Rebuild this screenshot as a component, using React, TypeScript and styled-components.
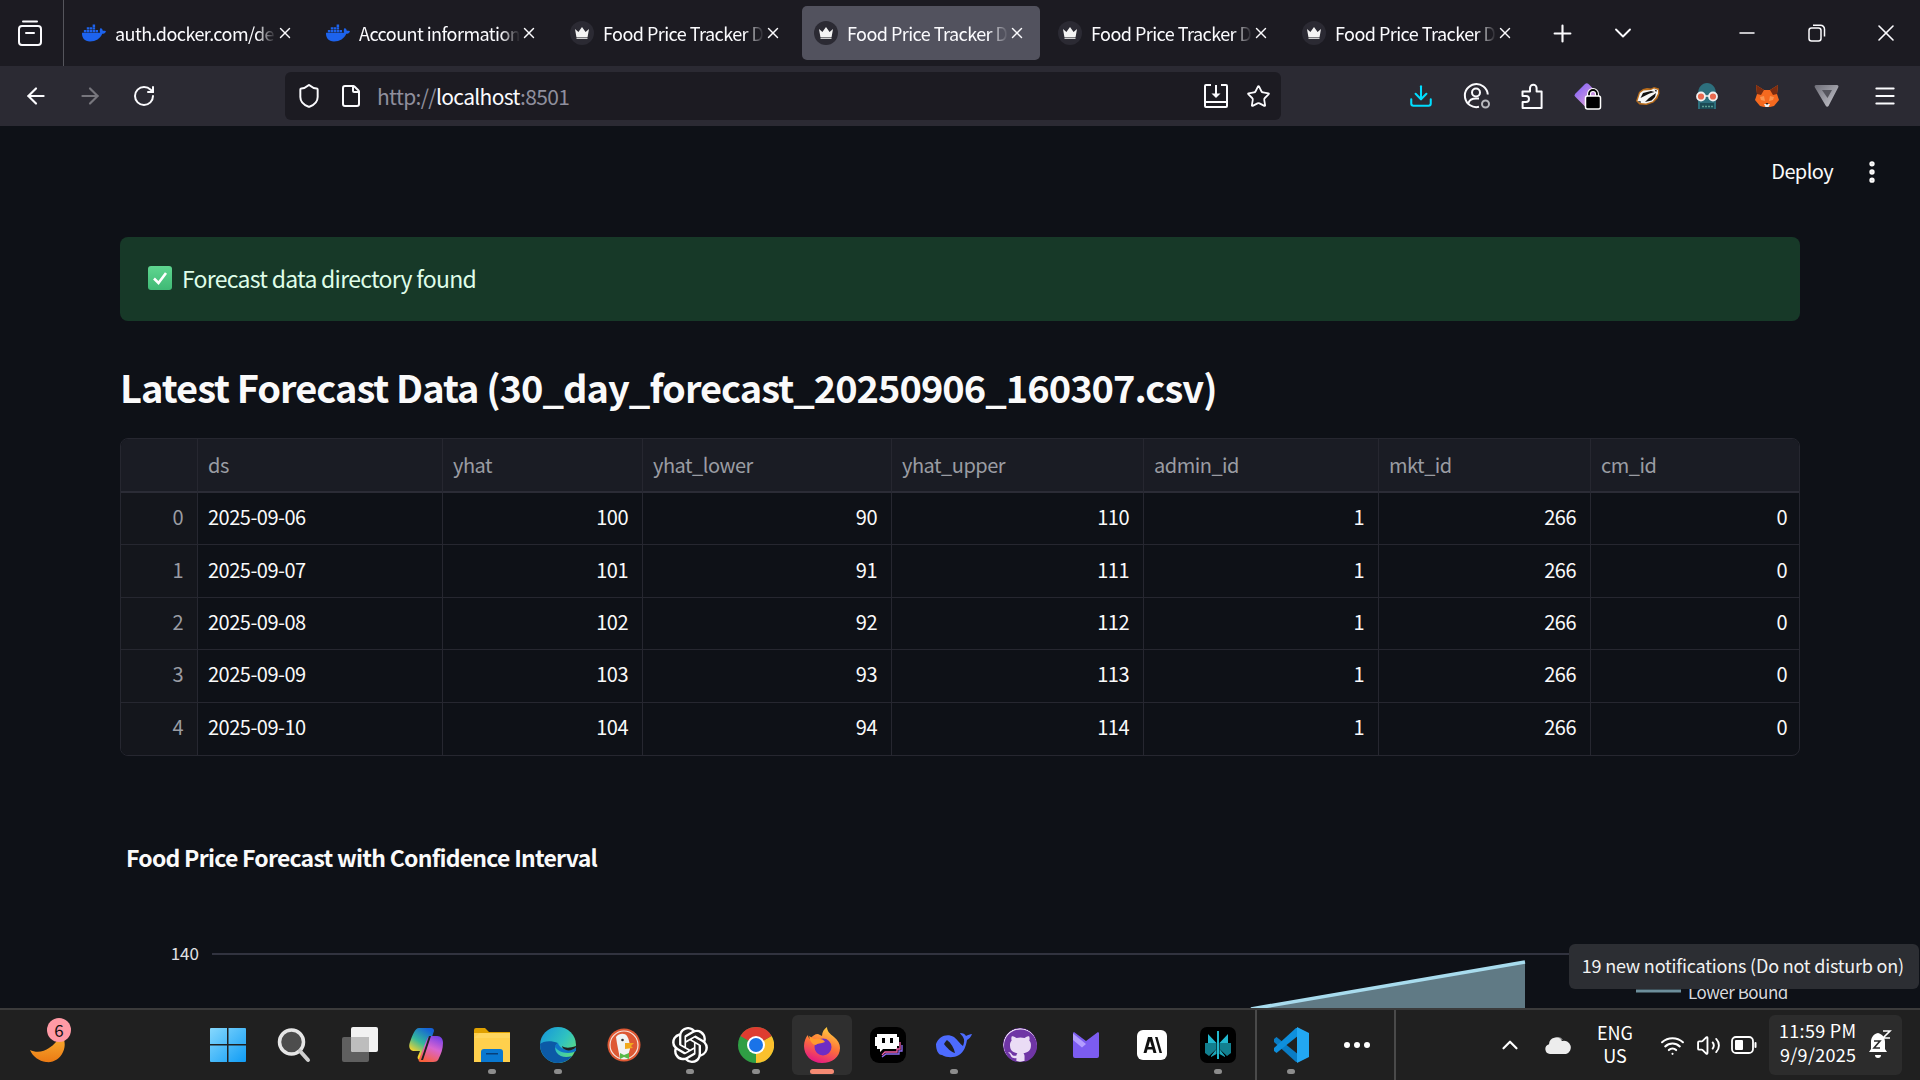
import * as React from 'react';
import styled, { createGlobalStyle } from 'styled-components';
import {
  ArrowLeft, ArrowRight, RotateCw, Shield, File, Star, Download, Menu,
  Plus, ChevronDown, ChevronUp, X, Minus, Wifi, Volume2, EllipsisVertical,
} from 'lucide-react';
import { FaDocker } from 'react-icons/fa';
import { SiOpenai, SiGithub } from 'react-icons/si';

const FONT = `"Noto Sans CJK SC", "Noto Sans", sans-serif`;

const GlobalStyle = createGlobalStyle`
  html, body { margin: 0; padding: 0; background: #0e1117; }
  body { font-family: ${FONT}; overflow: hidden; }
  * { box-sizing: border-box; }
`;

const Screen = styled.div`
  width: 1920px;
  height: 1080px;
  display: flex;
  flex-direction: column;
  overflow: hidden;
  position: relative;
`;

/* ---------- browser chrome ---------- */
const TabBar = styled.div`
  height: 66px;
  flex: none;
  display: flex;
  align-items: center;
  background: #1c1b22;
  color: #fbfbfe;
`;
const ViewButton = styled.div`
  width: 64px;
  height: 66px;
  flex: none;
  display: flex;
  align-items: center;
  justify-content: center;
  padding-right: 4px;
  border-right: 1px solid #55555c;
`;
const Tabs = styled.div`
  display: flex;
  gap: 6px;
  margin-left: 6px;
  margin-right: 3px;
`;
const Tab = styled.div<{ $active?: boolean }>`
  width: 238px;
  height: 54px;
  padding: 0 14px 0 12px;
  display: flex;
  align-items: center;
  border-radius: 5px;
  background: ${(p) => (p.$active ? '#52525e' : 'transparent')};
`;
const Favicon = styled.div<{ $plain?: boolean }>`
  width: 24px;
  height: 24px;
  flex: none;
  border-radius: 50%;
  display: flex;
  align-items: center;
  justify-content: center;
  background: ${(p) => (p.$plain ? 'transparent' : '#2b2a33')};
  color: #1d63ed;
`;
const TabTitle = styled.div`
  flex: 1;
  min-width: 0;
  margin-left: 9px;
  padding-bottom: 1px;
  font-size: 18px;
  letter-spacing: -0.55px;
  line-height: 26px;
  white-space: nowrap;
  overflow: hidden;
  -webkit-mask-image: linear-gradient(to right, #000 88%, transparent 100%);
  mask-image: linear-gradient(to right, #000 88%, transparent 100%);
`;
const TabClose = styled.div`
  width: 18px;
  flex: none;
  display: flex;
  justify-content: center;
  margin-top: -1px;
`;
const BarButton = styled.div<{ $w: number }>`
  width: ${(p) => p.$w}px;
  flex: none;
  display: flex;
  align-items: center;
  justify-content: center;
`;
const WindowControls = styled.div`
  margin-left: auto;
  display: flex;
  align-items: center;
`;

const ToolBar = styled.div`
  height: 60px;
  flex: none;
  display: flex;
  align-items: center;
  padding-left: 9px;
  background: #2b2a33;
  color: #fbfbfe;
`;
const UrlBar = styled.div`
  width: 996px;
  height: 48px;
  margin-left: 114px;
  margin-right: 112px;
  padding: 0 2px 0 11px;
  flex: none;
  display: flex;
  align-items: center;
  background: #1c1b22;
  border-radius: 6px;
`;
const PageIcon = styled.div`
  width: 28px;
  margin-left: 15px;
  display: flex;
  justify-content: center;
`;
const UrlText = styled.div`
  flex: 1;
  margin-left: 12px;
  font-size: 21px;
  letter-spacing: -0.65px;
  line-height: 28px;
  color: #8f8f9d;
  b { font-weight: 400; color: #fbfbfe; }
`;

/* ---------- streamlit page ---------- */
const Page = styled.main`
  flex: 1;
  min-height: 0;
  overflow: hidden;
  background: #0e1117;
  color: #fafafa;
`;
const PageHeader = styled.header`
  height: 92px;
  padding-right: 34px;
  display: flex;
  align-items: center;
  justify-content: flex-end;
`;
const DeployLabel = styled.div`
  font-size: 20px;
  letter-spacing: -0.6px;
  line-height: 28px;
  margin: 0 25px 2px 0;
`;
const PageBody = styled.div`
  padding: 19px 120px 0;
`;
const Alert = styled.div`
  height: 84px;
  padding: 0 28px 2px;
  display: flex;
  align-items: center;
  gap: 10px;
  background: #173928;
  border-radius: 8px;
  color: #dffde9;
  font-size: 23px;
  letter-spacing: -0.73px;
  line-height: 32px;
`;
const CheckMark = styled.div`
  width: 24px;
  height: 24px;
  flex: none;
  display: flex;
  align-items: center;
  justify-content: center;
  background: linear-gradient(#5fd690, #3fb975);
  border-radius: 3px;
`;
const Heading = styled.h2`
  margin: 41px 0 26px;
  font-size: 38px;
  letter-spacing: -0.98px;
  line-height: 50px;
  font-weight: 600;
  color: #fafafa;
`;
const DataTable = styled.div`
  display: grid;
  grid-template-columns: 77px 245px 200px 249px 252px 235px 212px 1fr;
  border: 1px solid #262730;
  border-radius: 8px;
  overflow: hidden;
  font-size: 20px;
  letter-spacing: -0.5px;
`;
const HeadCell = styled.div`
  height: 54px;
  padding: 0 12px 2px 10px;
  display: flex;
  align-items: center;
  background: #1a1c24;
  color: #9a9ca3;
  border-right: 1px solid #262730;
  border-bottom: 2px solid #2b2c36;
  &:nth-child(8) { border-right: 0; }
`;
const Cell = styled.div<{ $index?: boolean; $num?: boolean; $last?: boolean }>`
  height: 52.4px;
  padding: 0 14px 4px 10px;
  display: flex;
  align-items: center;
  justify-content: ${(p) => (p.$index || p.$num ? 'flex-end' : 'flex-start')};
  color: ${(p) => (p.$index ? '#9a9ca3' : '#fafafa')};
  background: ${(p) => (p.$index ? '#14161c' : 'transparent')};
  border-bottom: ${(p) => (p.$last ? '0' : '1px solid #262730')};
  border-right: 1px solid #262730;
  &:nth-child(8n) { border-right: 0; padding-right: 12px; }
`;
const ChartTitle = styled.div`
  margin: 86px 0 0 6px;
  font-size: 23px;
  letter-spacing: -0.75px;
  line-height: 30px;
  font-weight: 700;
  color: #fafafa;
`;
const Chart = styled.svg`
  display: block;
  width: 1680px;
  height: 137px;
`;

/* ---------- windows taskbar ---------- */
const Taskbar = styled.footer`
  height: 72px;
  flex: none;
  display: flex;
  align-items: center;
  background: #202020;
  border-top: 2px solid #3b3b3b;
  color: #fff;
`;
const Weather = styled.div`
  width: 96px;
  height: 70px;
  flex: none;
  position: relative;
  display: flex;
  align-items: center;
  justify-content: center;
  padding-top: 6px;
`;
const Badge = styled.div`
  position: absolute;
  top: 8px;
  left: 47px;
  width: 24px;
  height: 24px;
  border-radius: 50%;
  background: #ff9aa5;
  color: #111;
  font-size: 17px;
  line-height: 24px;
  text-align: center;
`;
const Apps = styled.div`
  display: flex;
  margin-left: 99px;
`;
const AppSlot = styled.div<{ $active?: boolean; $gap?: number }>`
  width: 60px;
  height: 60px;
  margin: 0 3px 0 ${(p) => p.$gap ?? 3}px;
  flex: none;
  position: relative;
  display: flex;
  align-items: center;
  justify-content: center;
  border-radius: 6px;
  background: ${(p) => (p.$active ? '#2f2f2f' : 'transparent')};
`;
const RunDot = styled.i<{ $active?: boolean }>`
  position: absolute;
  bottom: 1px;
  left: 50%;
  transform: translateX(-50%);
  width: ${(p) => (p.$active ? 24 : 8)}px;
  height: 5px;
  border-radius: 3px;
  background: ${(p) => (p.$active ? '#f58a73' : '#8c8c8c')};
`;
const GithubBadge = styled.div`
  width: 34px;
  height: 34px;
  border-radius: 50%;
  display: flex;
  align-items: center;
  justify-content: center;
  background: radial-gradient(circle, #eadcf5 68%, #6f35a5 70%);
  color: #6f35a5;
`;
const Divider = styled.div<{ $after: number }>`
  width: 2px;
  height: 70px;
  flex: none;
  margin-left: ${(p) => p.$after}px;
  background: #4a4a4a;
`;
const Tray = styled.div`
  margin-left: auto;
  margin-right: 18px;
  display: flex;
  align-items: center;
`;
const LangBox = styled.div`
  width: 66px;
  margin-right: 6px;
  padding-bottom: 3px;
  text-align: center;
  font-size: 18px;
  line-height: 23px;
`;
const ClockBox = styled.div`
  width: 133px;
  height: 60px;
  margin-left: 7px;
  padding: 0 10px 0 10px;
  display: flex;
  align-items: center;
  justify-content: space-between;
  background: #2c2c2c;
  border-radius: 6px;
`;
const ClockText = styled.div`
  padding-bottom: 7px;
  text-align: right;
  font-size: 18px;
  letter-spacing: 0.3px;
  line-height: 24px;
  white-space: nowrap;
`;
const NotifyTip = styled.div`
  position: absolute;
  right: 1px;
  bottom: 91px;
  height: 45px;
  padding: 0 15px 4px 13px;
  display: flex;
  align-items: center;
  background: #2c2e33;
  border-radius: 6px;
  color: #f2f2f2;
  font-size: 18px;
  letter-spacing: -0.2px;
  white-space: nowrap;
`;

/* ---------- drawn icons ---------- */
const Crown = () => (
  <svg width="16" height="14" viewBox="0 0 16 14">
    <path d="M1 3l3.4 3L8 1l3.6 5L15 3l-1.4 8H2.400z" fill="#f4f4f4" />
    <rect x="2.500" y="11.500" width="11" height="1.500" fill="#ccc" />
  </svg>
);
const FirefoxView = () => (
  <svg width="26" height="28" viewBox="0 0 26 28" fill="none" stroke="#fbfbfe" strokeWidth="2">
    <path d="M6 2.500h14" strokeLinecap="round" />
    <rect x="2" y="7" width="22" height="19" rx="3" />
    <path d="M9 14h8" strokeLinecap="round" />
  </svg>
);
const RestoreIcon = () => (
  <svg width="18" height="18" viewBox="0 0 18 18" fill="none" stroke="#fbfbfe" strokeWidth="1.500">
    <rect x="1" y="4" width="12" height="13" rx="2.500" />
    <path d="M5 1.200h7.500A4 4 0 0 1 16.500 5.200v7.300" />
  </svg>
);
const SaveIcon = () => (
  <svg width="26" height="26" viewBox="0 0 26 26" fill="none" stroke="#fbfbfe" strokeWidth="2">
    <path d="M8 2H3a1 1 0 0 0-1 1v20a1 1 0 0 0 1 1h20a1 1 0 0 0 1-1V3a1 1 0 0 0-1-1h-5" />
    <path d="M2 19h22" />
    <path d="M13 2v10" />
    <path d="M8.500 10.500h9L13 15z" fill="#fbfbfe" stroke="none" />
  </svg>
);
const AccountIcon = () => (
  <svg width="28" height="28" viewBox="0 0 28 28" fill="none" stroke="#fbfbfe" strokeWidth="2">
    <path d="M16 24.800A11.500 11.500 0 1 1 24.800 12.500" />
    <circle cx="13" cy="10.500" r="4" />
    <path d="M5.500 21c1-3.500 4-4.500 7.500-4.500h3" />
    <circle cx="22.500" cy="22" r="3.500" stroke="#b8b8bd" />
  </svg>
);
const PuzzleIcon = () => (
  <svg width="22" height="26" viewBox="0 0 22 26" fill="none" stroke="#fbfbfe" strokeWidth="2" strokeLinejoin="round">
    <path d="M1.500 8.500H9V5a3.300 3.300 0 0 1 6.600 0v3.500h5V25h-19v-6H5a3 3 0 0 0 0-6H1.500z" />
  </svg>
);
const ProtonPass = () => (
  <svg width="28" height="28" viewBox="0 0 28 28">
    <defs>
      <linearGradient id="pp" x1="0" y1="0" x2="1" y2="1">
        <stop offset="0" stopColor="#7a5cff" />
        <stop offset="1" stopColor="#f7b3c8" />
      </linearGradient>
    </defs>
    <path d="M1.500 11.500 11 2a2.500 2.500 0 0 1 3.500 0l10 10a2.500 2.500 0 0 1 0 3.500L15 25a2.500 2.500 0 0 1-3.500 0l-10-10a2.500 2.500 0 0 1 0-3.500z" fill="url(#pp)" />
    <path d="M15 15v-3a4 4 0 0 1 8 0v3" fill="none" stroke="#fff" strokeWidth="4" />
    <path d="M15 15v-3a4 4 0 0 1 8 0v3" fill="none" stroke="#000" strokeWidth="1.800" />
    <rect x="11.500" y="14" width="15" height="13" rx="2" fill="#000" stroke="#fff" strokeWidth="1.500" />
  </svg>
);
const Badger = () => (
  <svg width="25" height="20" viewBox="0 0 25 20">
    <path d="M1 15 4 6l4-3 4-1 4 .5L19 1l5 1.500.5 5-2 5-4 4-7 2.500-7-.5z" fill="#b96c1a" />
    <path d="M2.500 15 5 7l3.500-2.500L16 4l3-1.500L23 4v3.500l-2 4-3.500 4-6.500 2-5.500-.5z" fill="#f6f6f6" />
    <path d="M5.500 12 8 7l8-2 3.500 1-5 1.500-5 2.500zM10 16l4-4 7-5-1 4-3.500 3.500z" fill="#111" />
    <path d="M19.500 3.500l2.500 1-1 1.500z" fill="#111" />
    <path d="M2.500 15l3 2 .5-1.500z" fill="#111" />
  </svg>
);
const GlassesBot = () => (
  <svg width="26" height="28" viewBox="0 0 26 28">
    <path d="M4 12C4 5 8 1 13 1s9 4 9 11v15H4z" fill="#2d6f7d" />
    <rect x="6" y="21" width="14" height="6" fill="#1b4a55" />
    <path d="M8.500 24.500h1m2 0h1m2 0h1m2 0h1" stroke="#9ec" strokeWidth="1.500" />
    <circle cx="7" cy="14.500" r="4" fill="#ea6a50" stroke="#f1f1f1" strokeWidth="1.800" />
    <circle cx="19" cy="14.500" r="4" fill="#ea6a50" stroke="#f1f1f1" strokeWidth="1.800" />
    <path d="M11 14h4" stroke="#f1f1f1" strokeWidth="1.500" />
  </svg>
);
const FoxHead = () => (
  <svg width="24" height="24" viewBox="0 0 24 24">
    <path d="M1 1l8 5h6l8-5-1 9 2 6-5 6-4 1H9l-4-1-5-6 2-6z" fill="#f5691f" />
    <path d="M1 1l8 5-3 5-4-1zM23 1l-8 5 3 5 4-1z" fill="#7a2c10" />
    <path d="M5 13l4-1 1 5-4-1zM19 13l-4-1-1 5 4-1z" fill="#fa9450" />
    <path d="M9 20h6l-1.500 3h-3z" fill="#eee" />
    <path d="M10.500 19h3L12 21z" fill="#222" />
  </svg>
);
const GreyTriangle = () => (
  <svg width="26" height="26" viewBox="0 0 26 26">
    <defs>
      <linearGradient id="gt" x1="0" y1="0" x2="1" y2="1">
        <stop offset="0" stopColor="#6e6e78" />
        <stop offset="1" stopColor="#c8c8d0" />
      </linearGradient>
    </defs>
    <path d="M2 2h21a1.500 1.500 0 0 1 1.300 2.200L14.500 23a1.500 1.500 0 0 1-2.600 0L.8 4.200A1.500 1.500 0 0 1 2 2z" fill="url(#gt)" />
    <path d="M8 7h10l-4.500 8z" fill="#55555e" />
  </svg>
);
const Mango = () => (
  <svg width="36" height="30" viewBox="0 0 36 30">
    <defs>
      <linearGradient id="mg" x1="0" y1="0" x2="0" y2="1">
        <stop offset="0" stopColor="#f9b233" />
        <stop offset="1" stopColor="#ec7a14" />
      </linearGradient>
    </defs>
    <path d="M0 17c6 3 14 2 19-2 5-3 9-8 12-14 4 5 5 12 2 18-3 7-10 11-17 10C9 28 3 24 0 17z" fill="url(#mg)" />
  </svg>
);
const WinLogo = () => (
  <svg width="36" height="36" viewBox="0 0 36 36">
    <defs>
      <linearGradient id="w" x1="0" y1="0" x2="1" y2="1">
        <stop offset="0" stopColor="#86d8fd" />
        <stop offset="1" stopColor="#0f9cf5" />
      </linearGradient>
    </defs>
    <path d="M1 1h16v16H0V2a1 1 0 0 1 1-1zM18.500 1H35a1 1 0 0 1 1 1v15H18.500zM0 18.500h17V35H1a1 1 0 0 1-1-1zM18.500 18.500H36V34a1 1 0 0 1-1 1H18.500z" fill="url(#w)" />
  </svg>
);
const SearchGlyph = () => (
  <svg width="34" height="36" viewBox="0 0 34 36">
    <circle cx="14.500" cy="15" r="12" fill="#4d4d4d" stroke="#e6e6e6" strokeWidth="3.500" />
    <path d="M23 24l8 9" stroke="#d0d0d0" strokeWidth="4" strokeLinecap="round" />
  </svg>
);
const TaskView = () => (
  <svg width="36" height="36" viewBox="0 0 36 36">
    <rect x="0" y="10" width="27" height="25" rx="2" fill="#5f5f5f" />
    <rect x="9" y="0" width="27" height="25" rx="2" fill="#f2f2f2" />
    <path d="M9 10h18v15H11a2 2 0 0 1-2-2z" fill="#bdbdbd" />
  </svg>
);
const Copilot = () => (
  <svg width="34" height="36" viewBox="0 0 34 36">
    <defs>
      <linearGradient id="c1" x1="0.700" y1="0" x2="0.200" y2="1">
        <stop offset="0" stopColor="#1462d8" />
        <stop offset="0.450" stopColor="#35b89c" />
        <stop offset="0.800" stopColor="#f6d32d" />
      </linearGradient>
      <linearGradient id="c2" x1="0.700" y1="0" x2="0.300" y2="1">
        <stop offset="0" stopColor="#7a42e8" />
        <stop offset="0.450" stopColor="#d865cf" />
        <stop offset="1" stopColor="#f9603a" />
      </linearGradient>
    </defs>
    <path d="M10 1h12c2 0 3 1 3 3l-9 26c-1 3-2 3-5 3-2 0-3-2-2-4l2-5H5C1 24-1 20 1 15 3 9 6 1 10 1z" fill="url(#c1)" />
    <path d="M24 35H12c-2 0-3-1-2-3l8-20c1-2 2-3 4-3h6c4 0 6 3 6 7 0 6-2 11-4 15-1 3-3 4-6 4z" fill="url(#c2)" />
    <path d="M20 9h2l-8 24h-2z" fill="#202020" />
  </svg>
);
const Folder = () => (
  <svg width="36" height="34" viewBox="0 0 36 34">
    <path d="M0 2a2 2 0 0 1 2-2h9l4 4h21v6H0z" fill="#e0a100" />
    <path d="M0 5h36v29H0z" fill="#ffd04d" />
    <path d="M6 5h30v5H0z" fill="#ffde77" opacity="0.400" />
    <path d="M7 34V24a3 3 0 0 1 3-3h16a3 3 0 0 1 3 3v10z" fill="#0a78d0" />
    <rect x="12" y="25" width="12" height="1.500" fill="#073f78" />
  </svg>
);
const EdgeLogo = () => (
  <svg width="36" height="36" viewBox="0 0 36 36">
    <defs>
      <linearGradient id="e1" x1="0" y1="0" x2="1" y2="0.700">
        <stop offset="0" stopColor="#1493dc" />
        <stop offset="0.600" stopColor="#2fc2c0" />
        <stop offset="1" stopColor="#5fdc80" />
      </linearGradient>
    </defs>
    <circle cx="18" cy="18" r="18" fill="url(#e1)" />
    <path d="M0 17c0 11 8 19 18 19 6 0 11-3 14-7-6 2-12 1-15-3-3-4-2-8 1-10-7-3-15-2-18 1z" fill="#0c5aa6" />
    <path d="M18 16c1 4 6 7 11 7 3 0 6-1 7-3v4c-2 1-5 2-8 2-6 0-11-3-13-6 0-2 1-3 3-4z" fill="#0e74c8" />
    <path d="M22 19c3 2 7 2.500 14 0v1c-2 3-7 4-10 3-2-1-4-2-4-4z" fill="#202020" />
  </svg>
);
const DuckLogo = () => (
  <svg width="34" height="34" viewBox="0 0 34 34">
    <circle cx="17" cy="17" r="16.500" fill="#de5833" />
    <circle cx="17" cy="17" r="14" fill="none" stroke="#f6e5df" strokeWidth="1.200" />
    <path d="M9 9c3-4 9-4 11-1 2 3 3 8 3 13l-3 10h-7c-1-6-3-14-4-22z" fill="#f2f2f2" />
    <path d="M18 15h9l-3 3 2 2-8 1z" fill="#f2a81d" />
    <path d="M13 25l4 2 5-2v6l-5-2-4 2z" fill="#58b947" />
    <circle cx="15.500" cy="12" r="1.300" fill="#333" />
  </svg>
);
const ChromeLogo = () => (
  <svg width="36" height="36" viewBox="0 0 36 36">
    <circle cx="18" cy="18" r="18" fill="#2f9e44" />
    <path d="M18 18 33.600 9A18 18 0 0 1 18 36z" fill="#fbc02d" />
    <path d="M18 18 2.400 9A18 18 0 0 1 33.600 9z" fill="#de3c30" />
    <circle cx="18" cy="18" r="9" fill="#fff" />
    <circle cx="18" cy="18" r="7" fill="#1a73e8" />
  </svg>
);
const FirefoxLogo = () => (
  <svg width="36" height="36" viewBox="0 0 36 36">
    <defs>
      <linearGradient id="f1" x1="0.700" y1="0" x2="0.300" y2="1">
        <stop offset="0" stopColor="#ffd23f" />
        <stop offset="0.500" stopColor="#ff7139" />
        <stop offset="1" stopColor="#e31587" />
      </linearGradient>
    </defs>
    <path d="M18 36C7 36 0 28 0 19 0 14 2 10 4 8c0 2 1 3 2 4 2-3 5-5 8-5l4 2c0-4 2-7 5-9 0 4 3 7 7 10 4 3 6 7 6 11 0 9-8 15-18 15z" fill="url(#f1)" />
    <circle cx="19" cy="20" r="8.500" fill="#6e2cc4" />
    <path d="M5 9c3 1 4 3 6 3 4-1 9 0 10 3-4 2-8 1-9 3-3 0-6-3-7-9z" fill="#ff9a2e" />
  </svg>
);
const BotLogo = () => (
  <svg width="36" height="36" viewBox="0 0 36 36">
    <rect width="36" height="36" rx="9" fill="#000" />
    <path d="M7 7h20v3h2v9h-2v3H13l-3 3v-3H7v-3H5v-9h2z" fill="#fff" />
    <rect x="12" y="11" width="3" height="5" fill="#000" />
    <rect x="20" y="11" width="3" height="5" fill="#000" />
    <path d="M30 15v7h-3v3H15l-3 3" fill="none" stroke="#ee5fa7" strokeWidth="1.300" />
    <path d="M32 18v6h-3v3H16l-4 3" fill="none" stroke="#8f6df2" strokeWidth="1.300" />
  </svg>
);
const WhaleLogo = () => (
  <svg width="36" height="28" viewBox="0 0 36 28">
    <path d="M0 13C3 5 11 2 18 6c4 3 6 7 9 9 1-3 2-6 0-9-1-2-3-3-3-4 3 0 5 1 6 3 2-1 4-2 6-2-1 3-3 5-5 6-1 6-3 12-8 15-5 3-12 3-17 0C2 24 0 19 0 13z" fill="#4d6bfe" />
    <path d="M11 9c4 3 7 8 8 13-4-1-8-5-11-9 1-2 2-3 3-4z" fill="#202020" />
  </svg>
);
const ProtonMail = () => (
  <svg width="26" height="26" viewBox="0 0 26 26">
    <path d="M0 1.500c0-1 1-1.500 2-.8L13 9 24 .7c1-.7 2-.2 2 .8V24a2 2 0 0 1-2 2H2a2 2 0 0 1-2-2z" fill="#7c5cf0" />
    <path d="M0 1.500 13 12 9 15.500 0 8z" fill="#b39dff" />
  </svg>
);
const AnthropicLogo = () => (
  <svg width="30" height="30" viewBox="0 0 30 30">
    <rect width="30" height="30" rx="6" fill="#fff" />
    <path d="M11 7h4l4.500 16h-3l-1-3.500h-5l-1 3.500H6.500zM11.300 17h3.500L13 11z" fill="#111" fillRule="evenodd" />
    <path d="M18 7h2.500L25 23h-2.500z" fill="#111" />
  </svg>
);
const PerplexityLogo = () => (
  <svg width="36" height="36" viewBox="0 0 36 36">
    <rect width="36" height="36" rx="7" fill="#000" />
    <path d="M17 4v28h2V4z" fill="#22b8cd" />
    <path d="M16.500 16 8 7v9zM19.500 16 28 7v9z" fill="#21b8cf" />
    <path d="M16.500 16H5v10l4 3 7.500-7zM19.500 16H31v10l-4 3-7.500-7z" fill="#127f8f" />
    <path d="M16.500 22 11 29v1l5.500-3zM19.500 22l5.500 7v1l-5.500-3z" fill="#1ca6ba" />
  </svg>
);
const VsCodeLogo = () => (
  <svg width="36" height="36" viewBox="0 0 36 36">
    <path d="M1 12 3.500 10 26 28l-1 7-2 0L1 15z" fill="#0a7cc4" />
    <path d="M1 24l2.500 2L26 8l-1-7-2 0L1 21z" fill="#0e8fdd" />
    <path d="M24 0 36 6v24l-12 6z" fill="#22a7f2" />
  </svg>
);
const CloudIcon = () => (
  <svg width="26" height="18" viewBox="0 0 26 18">
    <path d="M7 6a6 6 0 0 1 11-2 5 5 0 0 0-6 3H7z" fill="#9a9a9a" />
    <path d="M5 18a5 5 0 0 1-1-9.800A7 7 0 0 1 17 5a5.500 5.500 0 0 1 4 13z" fill="#ededed" />
  </svg>
);
const BatteryIcon = () => (
  <svg width="26" height="18" viewBox="0 0 26 18" fill="none">
    <rect x="1" y="1" width="21" height="16" rx="4" stroke="#fff" strokeWidth="1.800" />
    <rect x="4" y="4" width="8" height="10" rx="1" fill="#fff" />
    <rect x="23.500" y="6" width="2" height="6" rx="1" fill="#fff" />
  </svg>
);
const BellSnooze = () => (
  <svg width="24" height="30" viewBox="0 0 24 30">
    <path d="M10 3c-5 1-7 5-7 9v7l-2 3h18l-2-3v-7c0-5-3-8-7-9z" fill="#fff" />
    <path d="M7 25h6a3 3 0 0 1-6 0z" fill="#fff" />
    <path d="M6 11h6l-6 7h6" fill="none" stroke="#2c2c2c" strokeWidth="1.600" />
    <path d="M15 1h7l-7 7h7" fill="none" stroke="#fff" strokeWidth="1.600" />
  </svg>
);

/* ---------- data ---------- */
const tabs = [
  { title: 'auth.docker.com/de', docker: true },
  { title: 'Account information', docker: true },
  { title: 'Food Price Tracker D' },
  { title: 'Food Price Tracker D', active: true },
  { title: 'Food Price Tracker D' },
  { title: 'Food Price Tracker D' },
];
const columns = ['', 'ds', 'yhat', 'yhat_lower', 'yhat_upper', 'admin_id', 'mkt_id', 'cm_id'];
const rows = [0, 1, 2, 3, 4];

const apps: { icon: React.ReactNode; run?: boolean; active?: boolean }[] = [
  { icon: <WinLogo /> },
  { icon: <SearchGlyph /> },
  { icon: <TaskView /> },
  { icon: <Copilot /> },
  { icon: <Folder />, run: true },
  { icon: <EdgeLogo />, run: true },
  { icon: <DuckLogo /> },
  { icon: <SiOpenai size={36} color="#fff" />, run: true },
  { icon: <ChromeLogo />, run: true },
  { icon: <FirefoxLogo />, run: true, active: true },
  { icon: <BotLogo /> },
  { icon: <WhaleLogo />, run: true },
  { icon: <GithubBadge><SiGithub size={33} /></GithubBadge> },
  { icon: <ProtonMail /> },
  { icon: <AnthropicLogo /> },
  { icon: <PerplexityLogo />, run: true },
];

const App = () => {
  return (
    <Screen>
      <GlobalStyle />
      <TabBar>
        <ViewButton><FirefoxView /></ViewButton>
        <Tabs>
          {tabs.map((t, i) => (
            <Tab key={i} $active={t.active}>
              <Favicon $plain={t.docker}>
                {t.docker ? <FaDocker size={24} /> : <Crown />}
              </Favicon>
              <TabTitle>{t.title}</TabTitle>
              <TabClose><X size={22} strokeWidth={1.9} /></TabClose>
            </Tab>
          ))}
        </Tabs>
        <BarButton $w={62}><Plus size={27} strokeWidth={1.9} /></BarButton>
        <BarButton $w={60}><ChevronDown size={28} strokeWidth={1.6} /></BarButton>
        <WindowControls>
          <BarButton $w={69}><Minus size={24} strokeWidth={1.5} /></BarButton>
          <BarButton $w={71}><RestoreIcon /></BarButton>
          <BarButton $w={68}><X size={28} strokeWidth={1.4} /></BarButton>
        </WindowControls>
      </TabBar>

      <ToolBar>
        <BarButton $w={54}><ArrowLeft size={26} strokeWidth={2} /></BarButton>
        <BarButton $w={54}><ArrowRight size={26} strokeWidth={2} color="#77767d" /></BarButton>
        <BarButton $w={54}><RotateCw size={24} strokeWidth={2} /></BarButton>
        <UrlBar>
          <Shield size={26} strokeWidth={1.8} />
          <PageIcon><File size={24} strokeWidth={2} /></PageIcon>
          <UrlText>http://<b>localhost</b>:8501</UrlText>
          <BarButton $w={42}><SaveIcon /></BarButton>
          <BarButton $w={42}><Star size={25} strokeWidth={1.7} /></BarButton>
        </UrlBar>
        <BarButton $w={56}><Download size={26} strokeWidth={1.9} color="#00ddff" /></BarButton>
        <BarButton $w={56}><AccountIcon /></BarButton>
        <BarButton $w={54}><PuzzleIcon /></BarButton>
        <BarButton $w={58}><ProtonPass /></BarButton>
        <BarButton $w={60}><Badger /></BarButton>
        <BarButton $w={60}><GlassesBot /></BarButton>
        <BarButton $w={60}><FoxHead /></BarButton>
        <BarButton $w={60}><GreyTriangle /></BarButton>
        <BarButton $w={56}><Menu size={26} strokeWidth={1.8} /></BarButton>
      </ToolBar>

      <Page>
        <PageHeader>
          <DeployLabel>Deploy</DeployLabel>
          <EllipsisVertical size={28} strokeWidth={2.6} color="#fafafa" />
        </PageHeader>
        <PageBody>
          <Alert>
            <CheckMark>
              <svg width="18" height="18" viewBox="0 0 18 18">
                <path d="M3 9.500 7.500 14 15 4" fill="none" stroke="#fff" strokeWidth="2.600" />
              </svg>
            </CheckMark>
            Forecast data directory found
          </Alert>
          <Heading>Latest Forecast Data (30_day_forecast_20250906_160307.csv)</Heading>
          <DataTable>
            {columns.map((c, i) => <HeadCell key={i}>{c}</HeadCell>)}
            {rows.map((r) => {
              const last = r === rows.length - 1;
              return (
                <React.Fragment key={r}>
                  <Cell $index $last={last}>{r}</Cell>
                  <Cell $last={last}>{`2025-09-${String(6 + r).padStart(2, '0')}`}</Cell>
                  <Cell $num $last={last}>{100 + r}</Cell>
                  <Cell $num $last={last}>{90 + r}</Cell>
                  <Cell $num $last={last}>{110 + r}</Cell>
                  <Cell $num $last={last}>1</Cell>
                  <Cell $num $last={last}>266</Cell>
                  <Cell $num $last={last}>0</Cell>
                </React.Fragment>
              );
            })}
          </DataTable>
          <ChartTitle>Food Price Forecast with Confidence Interval</ChartTitle>
          <Chart viewBox="120 871 1680 137">
            <path d="M212 953H1800" stroke="#31333f" strokeWidth="2" />
            <text x="199" y="959" fill="#e0e0e4" textAnchor="end" fontSize="17" fontFamily={FONT}>140</text>
            <path d="M1251 1008 1525 961V1008z" fill="#607a85" />
            <path d="M1251 1008 1525 961" stroke="#a8dcee" strokeWidth="3.500" fill="none" />
            <path d="M1636 990H1681" stroke="#6d8f9c" strokeWidth="3" />
            <text x="1688" y="998" fill="#d8d8dc" fontSize="17" letterSpacing="-0.5" fontFamily={FONT}>Lower Bound</text>
          </Chart>
        </PageBody>
      </Page>

      <Taskbar>
        <Weather>
          <Mango />
          <Badge>6</Badge>
        </Weather>
        <Apps>
          {apps.map((a, i) => (
            <AppSlot key={i} $active={a.active}>
              {a.icon}
              {a.run && <RunDot $active={a.active} />}
            </AppSlot>
          ))}
        </Apps>
        <Divider $after={4} />
        <AppSlot $gap={4}>
          <VsCodeLogo />
          <RunDot />
        </AppSlot>
        <AppSlot>
          <svg width="26" height="6" viewBox="0 0 26 6" fill="#fff">
            <circle cx="3" cy="3" r="3" />
            <circle cx="13" cy="3" r="3" />
            <circle cx="23" cy="3" r="3" />
          </svg>
        </AppSlot>
        <Divider $after={4} />
        <Tray>
          <BarButton $w={48}><ChevronUp size={26} strokeWidth={2} /></BarButton>
          <BarButton $w={48}><CloudIcon /></BarButton>
          <LangBox>ENG<br />US</LangBox>
          <BarButton $w={36}><Wifi size={25} strokeWidth={2} /></BarButton>
          <BarButton $w={36}><Volume2 size={25} strokeWidth={1.8} /></BarButton>
          <BarButton $w={36}><BatteryIcon /></BarButton>
          <ClockBox>
            <ClockText>11:59 PM<br />9/9/2025</ClockText>
            <BellSnooze />
          </ClockBox>
        </Tray>
      </Taskbar>

      <NotifyTip>19 new notifications (Do not disturb on)</NotifyTip>
    </Screen>
  );
};

export default App;
